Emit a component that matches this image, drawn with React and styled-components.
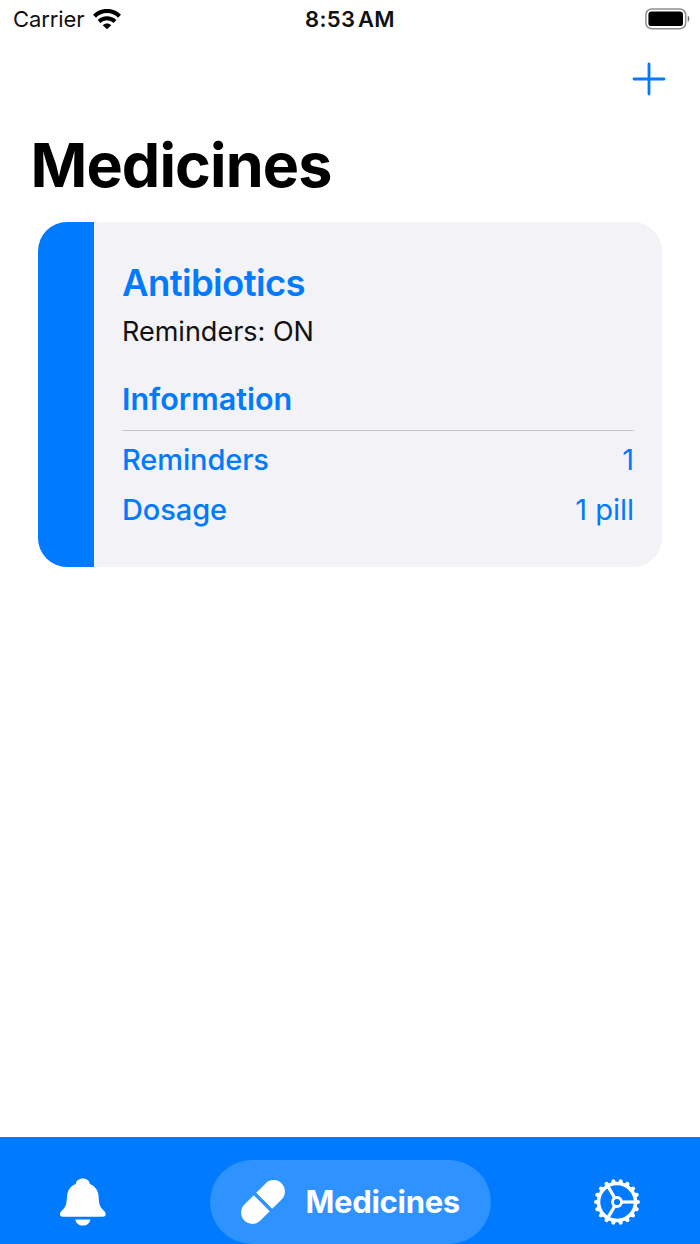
import React from 'react';
import styled, { createGlobalStyle } from 'styled-components';


const GlobalStyle = createGlobalStyle`
  * {
    box-sizing: border-box;
  }

  body {
    margin: 0;
    background: #fff;
    font-family: Inter, "Liberation Sans", sans-serif;
    -webkit-font-smoothing: antialiased;
  }
`

const Screen = styled.div`
  display: flex;
  flex-direction: column;
  width: 700px;
  height: 1244px;
  overflow: hidden;
  background: #fff;
  white-space: nowrap;
`

const StatusBar = styled.header`
  display: grid;
  grid-template-columns: 1fr auto 1fr;
  align-items: center;
  height: 38px;
  padding: 0 10px 0 13px;
  color: #111;
`

const Carrier = styled.span`
  display: flex;
  align-items: center;
  gap: 9px;
  font-size: 22px;
  letter-spacing: -0.1px;
`

const Time = styled.time`
  margin-right: 3px;
  font-size: 22px;
  font-weight: 600;
  letter-spacing: 0.3px;
  word-spacing: -3px;
`

const BatteryIcon = styled.svg`
  justify-self: end;
`

const Toolbar = styled.div`
  display: flex;
  justify-content: flex-end;
  height: 90px;
  padding: 24px 34px 0 0;
`

const AddButton = styled.button`
  width: 34px;
  height: 34px;
  padding: 0;
  border: 0;
  background: none;
`

const PageTitle = styled.h1`
  margin: 0 0 20px 30.5px;
  color: #000;
  font-size: 61px;
  font-weight: 700;
  line-height: 74px;
  letter-spacing: -0.9px;
`

const Card = styled.article`
  display: flex;
  height: 345px;
  margin: 0 38px;
  overflow: hidden;
  border-radius: 29px;
  background: #f2f2f7;
`

const Stripe = styled.div`
  width: 55.5px;
  background: #007aff;
`

const CardBody = styled.div`
  flex: 1;
  padding: 37px 28px 0 28.5px;
  color: #007aff;
`

const Name = styled.h2`
  margin: 0;
  font-size: 36.5px;
  font-weight: 600;
  line-height: 48px;
  letter-spacing: -0.6px;
`

const Status = styled.p`
  margin: 0;
  color: #111;
  font-size: 27px;
  line-height: 49px;
`

const Heading = styled.h3`
  margin: 18px 0 0;
  padding-bottom: 6px;
  border-bottom: 1px solid #c6c6ca;
  font-size: 30.5px;
  font-weight: 600;
  line-height: 50px;
`

const Row = styled.div`
  display: flex;
  justify-content: space-between;
  height: 50px;
  padding-top: 4px;
  font-size: 29px;
  line-height: 50px;
`

const Label = styled.span`
  font-weight: 500;
  letter-spacing: -0.1px;
`

const Value = styled.span`
  font-weight: 400;
`

const TabBar = styled.nav`
  display: grid;
  grid-template-columns: 1fr auto 1fr;
  height: 107px;
  margin-top: auto;
  padding-top: 23px;
  background: #007aff;
  color: #fff;
`

const Tab = styled.a`
  display: flex;
  align-items: center;
  justify-content: ${props => props.$end ? 'flex-end' : 'flex-start'};
  height: 84px;
  padding: ${props => props.$end ? '0 59.5px 1px 0' : '0 0 0 59px'};
`

const ActiveTab = styled.a`
  display: flex;
  align-items: center;
  width: 281px;
  height: 84px;
  padding: 0 0 1px 29px;
  gap: 19px;
  border-radius: 42px;
  background: #2e92ff;
  font-size: 31px;
  font-weight: 700;
  letter-spacing: -0.3px;
`

const teeth = Array.from({ length: 18 }, (_, i) => i * 20)

const Wifi = () => (
  <svg width="28" height="21" viewBox="0 0 28 21">
    <path d="M1.5 7.2C8.700.2 19.300.2 26.500 7.200" fill="none" stroke="#000" strokeWidth="4.200" />
    <path d="M6 12.500C10.500 8.200 17.500 8.200 22 12.500" fill="none" stroke="#000" strokeWidth="4" />
    <path d="M14 20.300L9.800 16.200C12.200 14 15.800 14 18.200 16.200Z" fill="#000" />
  </svg>
)

const Battery = () => (
  <BatteryIcon width="45" height="22" viewBox="0 0 45 22">
    <rect x="0.900" y="0.900" width="39.800" height="19.800" rx="5.800" fill="none" stroke="#8e8e8e" strokeWidth="1.500" />
    <rect x="3.400" y="3.500" width="34.600" height="14.600" rx="3.200" fill="#000" />
    <path d="M42.700 7.500C45 8.500 45 13 42.700 14Z" fill="#777" />
  </BatteryIcon>
)

const Bell = () => (
  <svg width="48" height="50" viewBox="0 0 48 50">
    <path d="M23.800 1.500C19.800 1.500 17.300 3.900 16.700 6.900C11.200 9.200 8.200 13.500 7.900 20.500C7.600 27 6.900 29.600 3.200 33.300C1.700 34.900.9 36 .9 37.300C.9 38.800 2 39.700 3.700 39.700H43.900C45.600 39.700 46.700 38.800 46.700 37.300C46.700 36 45.900 34.900 44.400 33.300C40.700 29.600 40 27 39.700 20.500C39.400 13.500 36.400 9.200 30.900 6.900C30.300 3.900 27.800 1.500 23.800 1.500Z" fill="#fff" />
    <path d="M16.300 42.500H31.400C30.800 46.300 27.800 48.600 23.800 48.600C19.900 48.600 16.900 46.300 16.300 42.500Z" fill="#fff" />
  </svg>
)

const Pill = () => (
  <svg width="48" height="48" viewBox="0 0 48 48">
    <g transform="translate(24 24) rotate(-45)" fill="#fff">
      <path d="M-1.700 -11.300H-15A11.300 11.300 0 0 0 -15 11.300H-1.700Z" />
      <path d="M1.700 -11.300H15A11.300 11.300 0 0 1 15 11.300H1.700Z" />
    </g>
  </svg>
)

const Gear = () => (
  <svg width="48" height="48" viewBox="-24 -24 48 48">
    <g fill="none" stroke="#fff">
      <circle r="18.500" strokeWidth="3.600" />
      <circle r="4.500" strokeWidth="2.800" />
      {[0, 120, 240].map(angle => (
        <path key={angle} d="M5 0H18" strokeWidth="3.200" transform={`rotate(${angle})`} />
      ))}
    </g>
    {teeth.map(angle => (
      <path key={angle} d="M19 -2.600L22.400 -1.600Q23.600 0 22.400 1.600L19 2.600Z" fill="#fff" transform={`rotate(${angle})`} />
    ))}
  </svg>
)

const details = [
  { label: 'Reminders', value: '1' },
  { label: 'Dosage', value: '1 pill' },
]

const App = () => (
  <Screen>
    <GlobalStyle />
    <StatusBar>
      <Carrier>Carrier <Wifi /></Carrier>
      <Time>8:53 AM</Time>
      <Battery />
    </StatusBar>
    <Toolbar>
      <AddButton aria-label="Add medicine">
        <svg width="34" height="34" viewBox="0 0 34 34">
          <path d="M17 2V32M2 17H32" stroke="#007aff" strokeWidth="2.800" strokeLinecap="round" />
        </svg>
      </AddButton>
    </Toolbar>
    <PageTitle>Medicines</PageTitle>
    <Card>
      <Stripe />
      <CardBody>
        <Name>Antibiotics</Name>
        <Status>Reminders: ON</Status>
        <Heading>Information</Heading>
        {details.map(item => (
          <Row key={item.label}>
            <Label>{item.label}</Label>
            <Value>{item.value}</Value>
          </Row>
        ))}
      </CardBody>
    </Card>
    <TabBar>
      <Tab><Bell /></Tab>
      <ActiveTab><Pill />Medicines</ActiveTab>
      <Tab $end><Gear /></Tab>
    </TabBar>
  </Screen>
);

export default App;
